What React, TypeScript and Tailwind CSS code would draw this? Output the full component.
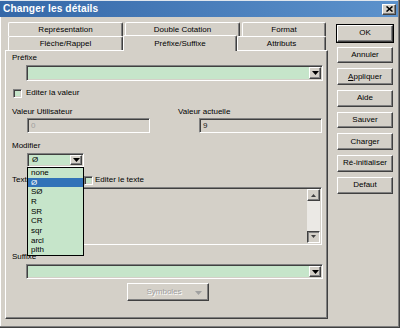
import React from "react";

const SUNKEN =
  "border border-t-[#808080] border-l-[#808080] border-b-white border-r-white shadow-[inset_1px_1px_0_#404040,inset_-1px_-1px_0_#d4d0c8]";
const RAISED =
  "border border-t-white border-l-white border-b-[#404040] border-r-[#404040] shadow-[inset_-1px_-1px_0_#808080,inset_1px_1px_0_#d4d0c8]";

function Arrow({ color = "#000" }: { color?: string }) {
  return (
    <svg width="7" height="4" viewBox="0 0 7 4">
      <path d="M0 0h7L3.5 4z" fill={color} />
    </svg>
  );
}

function ArrowUp({ color = "#404040" }: { color?: string }) {
  return (
    <svg width="5" height="3" viewBox="0 0 5 3">
      <path d="M0 3h5L2.5 0z" fill={color} />
    </svg>
  );
}

function Combo({ w, h, text }: { w: string; h: string; text?: string }) {
  return (
    <div className={`${w} ${h} ${SUNKEN} bg-[#c6e5ca] flex items-stretch p-[1px]`}>
      <div className="flex-1 pl-[3px] flex items-center text-[8px] leading-[10px] text-black">{text}</div>
      <div className={`w-[12px] ${RAISED} bg-[#d4d0c8] flex items-center justify-center`}>
        <Arrow />
      </div>
    </div>
  );
}

function Btn({ label, def }: { label: React.ReactNode; def?: boolean }) {
  return (
    <div className={`w-[56px] h-[16.7px] ${def ? "outline outline-1 outline-black" : ""}`}>
      <div className={`w-full h-full ${RAISED} bg-[#d4d0c8] flex items-center justify-center text-[8px] leading-[10px] text-black`}>
        {label}
      </div>
    </div>
  );
}

function Tab({ w, label, selected }: { w: string; label: string; selected?: boolean }) {
  return (
    <div
      className={`${w} ${selected ? "h-[16px] -mt-[1px] -mb-[1px] relative z-10" : "h-[14px]"} bg-[#d4d0c8] border-t border-l border-r border-t-white border-l-white border-r-[#404040] rounded-t-[2px] shadow-[inset_-1px_0_0_#808080] flex items-center justify-center text-[8px] leading-[10px] text-black`}
    >
      {label}
    </div>
  );
}

function Check() {
  return <div className={`w-[9px] h-[9px] ${SUNKEN} bg-[#c6e5ca]`} />;
}

const items = ["none", "Ø", "SØ", "R", "SR", "CR", "sqr", "arcl", "plth"];

export default function App() {
  return (
    <div className="w-[400px] h-[328px] bg-[#d4d0c8] relative overflow-hidden font-['Liberation_Sans',Arial,sans-serif] shadow-[inset_-1px_-1px_0_#404040,inset_-2px_-2px_0_#808080,inset_1px_1px_0_#ffffff] pl-[2px]">
      {/* Title bar */}
      <div className="h-[17px] mr-[2px] -ml-[2px] bg-linear-to-r from-[#3568a8] to-[#5c92cc] border-t border-t-[#dfe6ee] flex items-center pl-[3px] pr-[2px]">
        <span className="text-white font-bold text-[10.2px] leading-[12px] tracking-[0.1px]">Changer les détails</span>
        <div className="flex-1" />
        <div className={`w-[14px] h-[11px] ${RAISED} bg-[#d4d0c8] flex items-center justify-center`}>
          <svg width="7" height="6" viewBox="0 0 7 6">
            <path d="M0.5 0.5L6.5 5.5M6.5 0.5L0.5 5.5" stroke="#000" strokeWidth="1.6" />
          </svg>
        </div>
      </div>

      <div className="flex">
        {/* Left: tabs + panel */}
        <div className="w-[326px] pl-[3px] pt-[5px]">
          <div className="flex pl-[3px] h-[14px]">
            <Tab w="w-[115px]" label="Représentation" />
            <div className="w-[2px]" />
            <Tab w="w-[115px]" label="Double Cotation" />
            <div className="w-[2px]" />
            <Tab w="w-[84px]" label="Format" />
          </div>
          <div className="flex pl-[3px] h-[14px]">
            <Tab w="w-[115px]" label="Flèche/Rappel" />
            <Tab w="w-[114px]" label="Préfixe/Suffixe" selected />
            <Tab w="w-[89px]" label="Attributs" />
          </div>

          {/* Panel */}
          <div className="relative w-[323px] h-[269px] border border-t-white border-l-white border-b-[#404040] border-r-[#404040] shadow-[inset_-1px_-1px_0_#808080] flex flex-col pl-[6px] text-[8px] leading-[10px] text-black">
            <div className="mt-[2px] h-[10px]">Préfixe</div>
            <div className="mt-[2px] ml-[14px]">
              <Combo w="w-[297px]" h="h-[16px]" />
            </div>

            <div className="mt-[7px] h-[10px] flex items-center ml-[1px]">
              <Check />
              <span className="ml-[4px]">Editer la valeur</span>
            </div>

            <div className="mt-[9px] h-[10px] flex">
              <span className="w-[166px]">Valeur Utilisateur</span>
              <span>Valeur actuelle</span>
            </div>
            <div className="mt-[1px] h-[15px] flex ml-[15px]">
              <div className={`w-[123px] h-[15px] ${SUNKEN} bg-[#d4d0c8] pl-[3px] flex items-center text-[#a0a0a0]`}>0</div>
              <div className="w-[49px]" />
              <div className={`w-[123px] h-[15px] ${SUNKEN} bg-[#d4d0c8] pl-[3px] flex items-center text-[#202020]`}>9</div>
            </div>

            <div className="mt-[8px] h-[10px]">Modifier</div>
            <div className="mt-[2px] ml-[15px]">
              <Combo w="w-[57px]" h="h-[14px]" text="Ø" />
            </div>

            <div className="mt-[8px] h-[10px] flex items-center">
              <span className="w-[72px]">Texte</span>
              <Check />
              <span className="ml-[2px]">Editer le texte</span>
            </div>
            <div className={`mt-[2px] ml-[15px] w-[295px] h-[58px] ${SUNKEN} bg-[#d4d0c8] flex justify-end p-[1px]`}>
              <div className="w-[13px] h-full flex flex-col bg-[#ebe9e5]">
                <div className={`h-[12px] ${RAISED} bg-[#d4d0c8] flex items-center justify-center`}>
                  <ArrowUp />
                </div>
                <div className="flex-1" />
                <div className={`h-[12px] ${RAISED} bg-[#d4d0c8] flex items-center justify-center rotate-180`}>
                  <ArrowUp />
                </div>
              </div>
            </div>

            <div className="mt-[7px] h-[10px]">Suffixe</div>
            <div className="mt-[2px] ml-[14px]">
              <Combo w="w-[297px]" h="h-[15px]" />
            </div>

            <div className="mt-[4px] ml-[115px]">
              <div className={`w-[82px] h-[18px] ${RAISED} bg-[#d4d0c8] flex items-center relative`}>
                <span className="flex-1 text-center text-[#a0a0a0] [text-shadow:1px_1px_0_#ffffff] pr-[8px]">Symboles</span>
                <div className="absolute right-[6px] top-[7px]">
                  <Arrow color="#a0a0a0" />
                </div>
              </div>
            </div>

            {/* Dropdown list overlay */}
            <div className="absolute left-[21px] top-[116px] w-[57px] border border-black bg-[#c6e5ca] z-20">
              {items.map((it, i) => (
                <div
                  key={it}
                  className={`h-[9.67px] leading-[9.67px] pl-[3px] text-[8px] ${i === 1 ? "bg-[#3172b8] text-white" : "text-black"}`}
                >
                  {it}
                </div>
              ))}
            </div>
          </div>
        </div>

        {/* Right: buttons */}
        <div className="pl-[9px] pt-[8px] flex flex-col gap-[5px]">
          <Btn label="OK" def />
          <Btn label="Annuler" />
          <Btn
            label={
              <span>
                <span className="underline">A</span>ppliquer
              </span>
            }
          />
          <Btn label="Aide" />
          <Btn label="Sauver" />
          <Btn label="Charger" />
          <Btn label="Ré-initialiser" />
          <Btn label="Defaut" />
        </div>
      </div>
    </div>
  );
}
